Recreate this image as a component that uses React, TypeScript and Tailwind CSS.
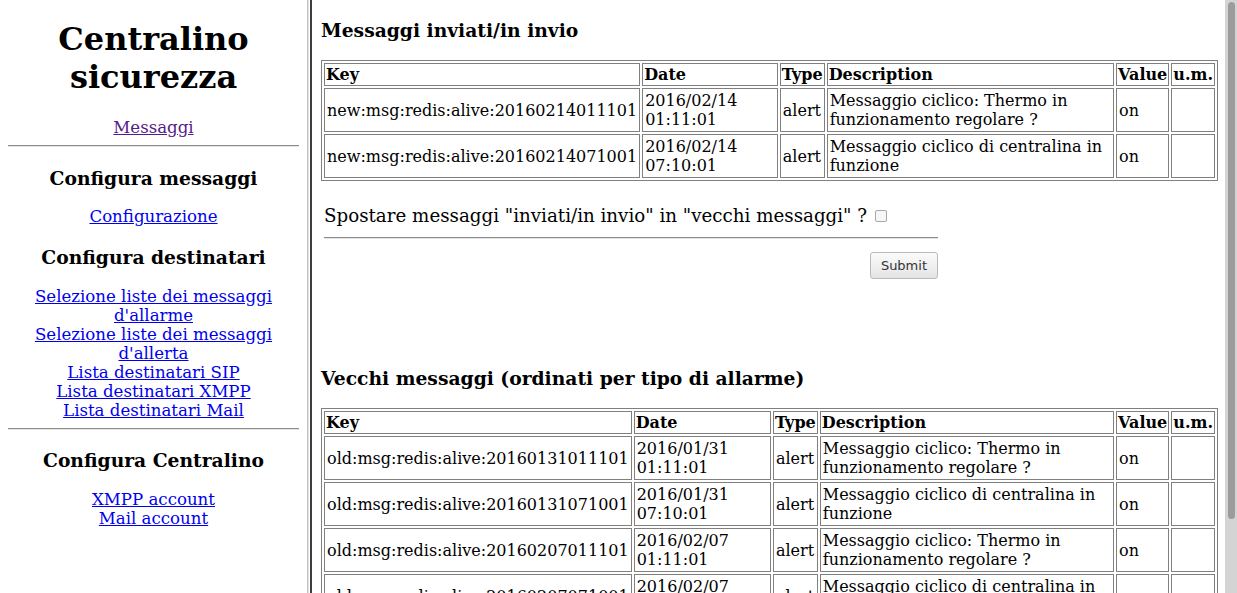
import React from "react"

interface Msg {
  key: string
  date: string
  time: string
  type: string
  description: string
  value: string
  um: string
}

const sent: Msg[] = [
  {
    key: "new:msg:redis:alive:20160214011101",
    date: "2016/02/14",
    time: "01:11:01",
    type: "alert",
    description: "Messaggio ciclico: Thermo in funzionamento regolare ?",
    value: "on",
    um: "",
  },
  {
    key: "new:msg:redis:alive:20160214071001",
    date: "2016/02/14",
    time: "07:10:01",
    type: "alert",
    description: "Messaggio ciclico di centralina in funzione",
    value: "on",
    um: "",
  },
]

const old: Msg[] = [
  {
    key: "old:msg:redis:alive:20160131011101",
    date: "2016/01/31",
    time: "01:11:01",
    type: "alert",
    description: "Messaggio ciclico: Thermo in funzionamento regolare ?",
    value: "on",
    um: "",
  },
  {
    key: "old:msg:redis:alive:20160131071001",
    date: "2016/01/31",
    time: "07:10:01",
    type: "alert",
    description: "Messaggio ciclico di centralina in funzione",
    value: "on",
    um: "",
  },
  {
    key: "old:msg:redis:alive:20160207011101",
    date: "2016/02/07",
    time: "01:11:01",
    type: "alert",
    description: "Messaggio ciclico: Thermo in funzionamento regolare ?",
    value: "on",
    um: "",
  },
  {
    key: "old:msg:redis:alive:20160207071001",
    date: "2016/02/07",
    time: "07:10:01",
    type: "alert",
    description: "Messaggio ciclico di centralina in funzione",
    value: "on",
    um: "",
  },
  {
    key: "old:msg:redis:alive:20160208011101",
    date: "2016/02/08",
    time: "01:11:01",
    type: "alert",
    description: "Messaggio ciclico: Thermo in funzionamento regolare ?",
    value: "on",
    um: "",
  },
]

const th = "border border-[#808080] p-[1px] text-left align-middle font-bold"
const td = "border border-[#808080] p-[2px] text-left align-middle"

function MsgTable({ rows }: { rows: Msg[] }) {
  return (
    <table className="w-full border-separate border-spacing-[2px] border border-[#808080]">
      <thead>
        <tr>
          <th className={th}>Key</th>
          <th className={th}>Date</th>
          <th className={th}>Type</th>
          <th className={th}>Description</th>
          <th className={th}>Value</th>
          <th className={th}>u.m.</th>
        </tr>
      </thead>
      <tbody>
        {rows.map((r) => (
          <tr key={r.key}>
            <td className={td}>{r.key}</td>
            <td className={td}>
              {r.date} {r.time}
            </td>
            <td className={td}>{r.type}</td>
            <td className={td}>{r.description}</td>
            <td className={td}>{r.value}</td>
            <td className={td}>{r.um}</td>
          </tr>
        ))}
      </tbody>
    </table>
  )
}

function Hr() {
  return <div className="h-[2px] border-t border-t-[#8c8c8c] border-b border-b-[#e4e4e4]" />
}

const link = "text-[#0000ee] underline"

export default function App() {
  return (
    <div className="w-[1237px] h-[593px] overflow-hidden flex bg-white text-black text-[16px] leading-[19px] font-['DejaVu_Serif',serif]">
      {/* menu frame */}
      <div className="w-[307px] shrink-0 px-[8px] text-center">
        <h1 className="mt-[20px] text-[32px] leading-[38px] font-bold">Centralino sicurezza</h1>
        <div className="mt-[22px] text-[16.6px]">
          <a href="#" className="text-[#551a8b] underline">
            Messaggi
          </a>
        </div>
        <div className="my-[8px]">
          <Hr />
        </div>
        <h3 className="mt-[20px] text-[18.72px] leading-[22px] font-bold">Configura messaggi</h3>
        <div className="mt-[18px] text-[16.6px]">
          <a href="#" className={link}>
            Configurazione
          </a>
        </div>
        <h3 className="mt-[20px] text-[18.72px] leading-[22px] font-bold">Configura destinatari</h3>
        <div className="mt-[19px] flex flex-col items-center text-[16.6px]">
          <a href="#" className={link}>
            Selezione liste dei messaggi d'allarme
          </a>
          <a href="#" className={link}>
            Selezione liste dei messaggi d'allerta
          </a>
          <a href="#" className={link}>
            Lista destinatari SIP
          </a>
          <a href="#" className={link}>
            Lista destinatari XMPP
          </a>
          <a href="#" className={link}>
            Lista destinatari Mail
          </a>
        </div>
        <div className="my-[8px]">
          <Hr />
        </div>
        <h3 className="mt-[19px] text-[18.72px] leading-[22px] font-bold">Configura Centralino</h3>
        <div className="mt-[19px] flex flex-col items-center text-[16.6px]">
          <a href="#" className={link}>
            XMPP account
          </a>
          <a href="#" className={link}>
            Mail account
          </a>
        </div>
      </div>

      {/* frame border */}
      <div className="w-px shrink-0 bg-[#c2c2c2]" />
      <div className="w-px shrink-0 bg-[#e2e2e2]" />
      <div className="w-px shrink-0 bg-white" />
      <div className="w-[2px] shrink-0 bg-[#3e3e3e]" />

      {/* main frame */}
      <div className="flex-1 min-w-0 overflow-hidden pl-[9px] pr-[7px]">
        <h3 className="mt-[19px] text-[18.72px] leading-[22px] font-bold">Messaggi inviati/in invio</h3>
        <div className="mt-[19px]">
          <MsgTable rows={sent} />
        </div>

        <form className="mt-[25px] ml-[3px] w-[614px]">
          <div className="flex items-center gap-[8px] text-[18.25px]">
            <span>Spostare messaggi "inviati/in invio" in "vecchi messaggi" ?</span>
            <input
              type="checkbox"
              className="appearance-none w-[12px] h-[12px] rounded-[2px] border border-[#a8a8a8] bg-[#f6f6f6]"
            />
          </div>
          <div className="mt-[12px]">
            <Hr />
          </div>
          <div className="mt-[13px] flex justify-end">
            <button
              type="button"
              className="h-[27px] px-[10px] rounded-[3px] border border-[#b9b9b9] bg-gradient-to-b from-[#fbfbfb] to-[#e4e4e4] text-[13px] text-[#333] font-['DejaVu_Sans',sans-serif]"
            >
              Submit
            </button>
          </div>
        </form>

        <h3 className="mt-[88px] text-[18.72px] leading-[22px] font-bold">
          Vecchi messaggi (ordinati per tipo di allarme)
        </h3>
        <div className="mt-[19px]">
          <MsgTable rows={old} />
        </div>
      </div>

      {/* scrollbar */}
      <div className="w-[12px] shrink-0 bg-[#d4d4d4] pt-[2px] pl-[3px] pr-[2px]">
        <div className="h-[517px] rounded-[4px] bg-[#9c9c9c]" />
      </div>
    </div>
  )
}
